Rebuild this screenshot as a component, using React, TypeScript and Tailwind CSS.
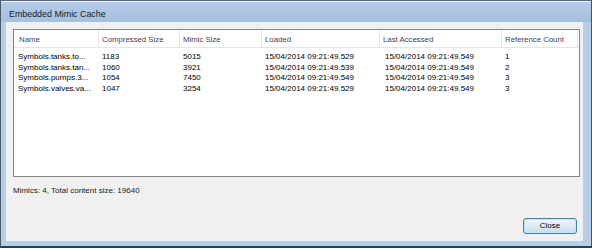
const columns = ["Name", "Compressed Size", "Mimic Size", "Loaded", "Last Accessed", "Reference Count"]

const rows = [
    ["Symbols.tanks.to...", "1183", "5015", "15/04/2014 09:21:49.529", "15/04/2014 09:21:49.549", "1"],
    ["Symbols.tanks.tan...", "1060", "3921", "15/04/2014 09:21:49.539", "15/04/2014 09:21:49.549", "2"],
    ["Symbols.pumps.3...", "1054", "7450", "15/04/2014 09:21:49.549", "15/04/2014 09:21:49.549", "3"],
    ["Symbols.valves.va...", "1047", "3254", "15/04/2014 09:21:49.529", "15/04/2014 09:21:49.549", "3"],
]

const grid = "grid grid-cols-[85px_81px_82px_118px_122px_76px]"

export default function App() {
    return (
        <div
            className="w-[592px] h-[248px] flex flex-col bg-[#b6cee8] border-t border-l border-r border-b-2 border-t-[#5b6b7b] border-l-[#4a5868] border-r-[#3f5566] border-b-[#1d4756] text-black"
            style={{ fontFamily: '"Liberation Sans", Arial, sans-serif' }}
        >
            <div className="h-[21px] shrink-0 border-t border-[#e4eef8] bg-gradient-to-b from-[#b3cbe6] to-[#a5c1e0] pl-[8px] pt-[7px]">
                <p className="text-[8.9px] leading-[10px] text-[#1b1b1b]">Embedded Mimic Cache</p>
            </div>
            <div className="flex-1 flex pl-[5px] pr-[8px] pb-[5px]">
                <div className="flex-1 flex flex-col bg-[#f0f0f0] pl-[7px] pt-[7px] pr-[3px] pb-[7px]">
                    <div className="h-[148px] shrink-0 bg-white border border-[#828790]">
                        <div className={`${grid} h-[18px] border-b border-[#e5e5e5] text-[7.8px] text-[#3d4450]`}>
                            {columns.map((c, i) => (
                                <div key={c} className={`flex items-center pt-[3px] border-r border-[#e5e5e5] ${i === 0 ? "pl-[5px]" : "pl-[3px]"}`}>{c}</div>
                            ))}
                        </div>
                        <div className="pt-[4px] text-[8px] leading-[10.5px]">
                            {rows.map((r, ri) => (
                                <div key={ri} className={grid}>
                                    {r.map((cell, ci) => (
                                        <div key={ci} className={`whitespace-nowrap overflow-hidden ${ci === 0 ? "pl-[4px]" : ci === 4 ? "pl-[5px]" : "pl-[3px]"}`}>{cell}</div>
                                    ))}
                                </div>
                            ))}
                        </div>
                    </div>
                    <p className="mt-[9px] text-[8px] leading-[10px] text-[#1a1a1a]">Mimics: 4, Total content size: 19640</p>
                    <div className="flex-1" />
                    <div className="flex justify-end pr-[3px]">
                        <button className="w-[54px] h-[16px] rounded-[3px] border border-[#3c7fb1] bg-gradient-to-b from-[#eef6fc] via-[#dcebf6] to-[#c4dcee] text-[8px] leading-none text-black shadow-[inset_0_0_0_1px_#c6e6fb]">
                            Close
                        </button>
                    </div>
                </div>
            </div>
        </div>
    )
}
